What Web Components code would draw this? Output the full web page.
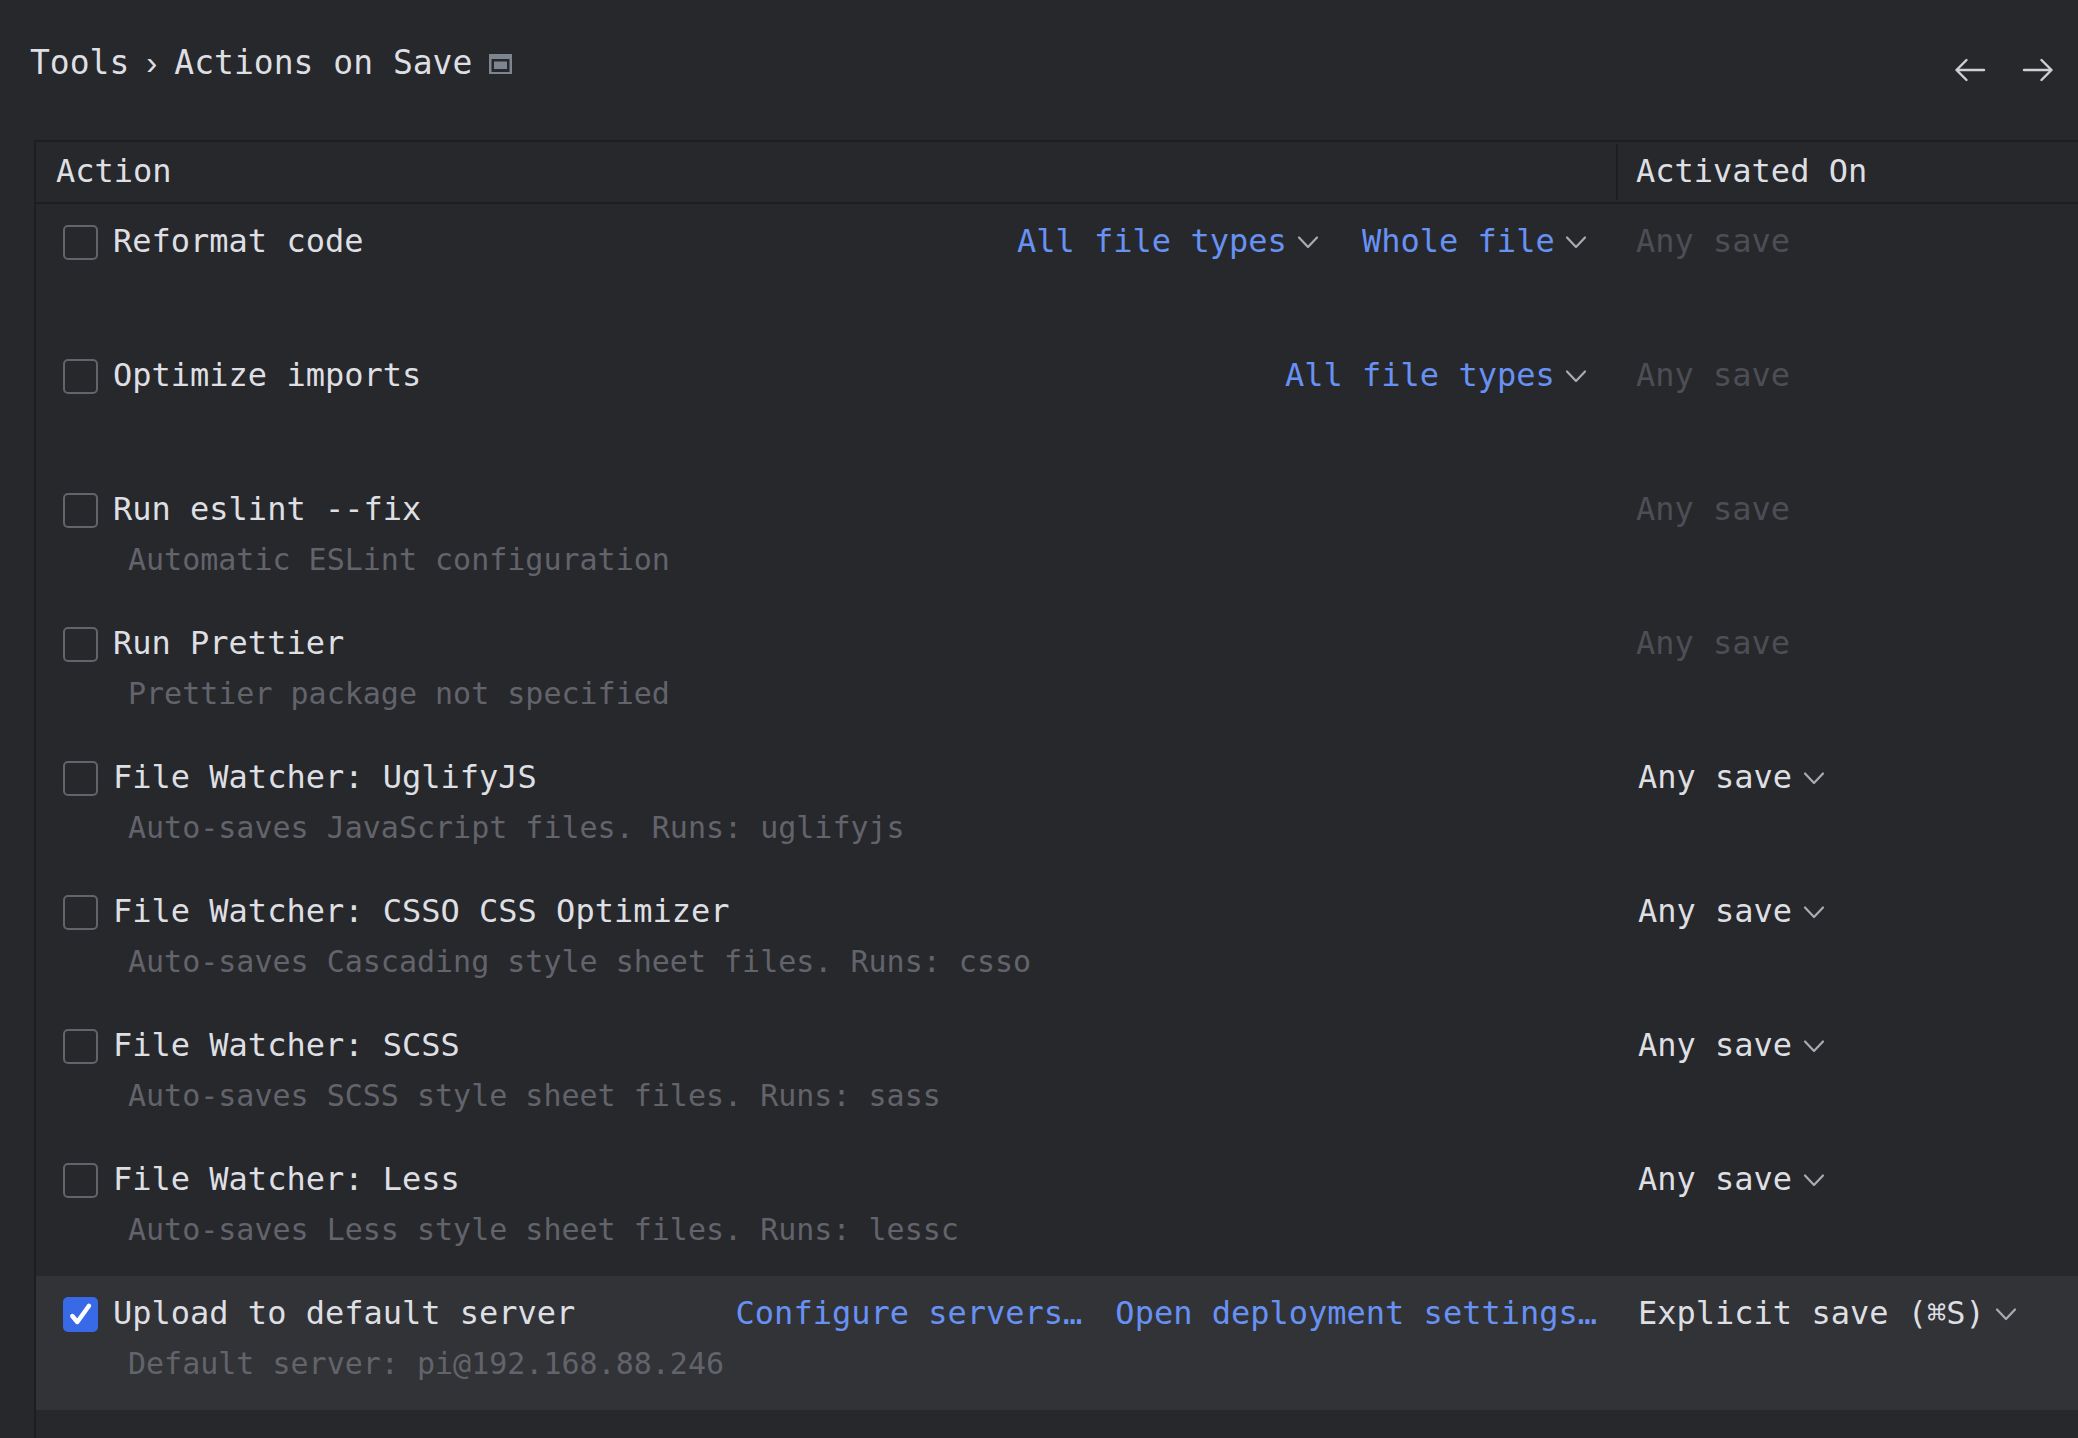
<!DOCTYPE html>
<html lang="en">
<head>
<meta charset="utf-8">
<title>Actions on Save</title>
<style>
  :root {
    --bg: #27282b;
    --line: #1d1e20;
    --selected: #323337;
    --text: #dedfe3;
    --muted: #62636b;
    --disabled: #4d4e55;
    --link: #6891f4;
    --accent: #3869e6;
    --icon: #a9abb3;
  }
  html, body { height: 100%; }
  body {
    margin: 0;
    background: var(--bg);
    color: var(--text);
    font: 32px/40px "DejaVu Sans Mono", "Liberation Mono", monospace;
  }
</style>
</head>
<body>
<settings-page>
  <settings-header slot="header">
    <span slot="group">Tools</span>
    <span slot="page">Actions on Save</span>
  </settings-header>
  <actions-table></actions-table>
</settings-page>

<script>
class BaseElement extends HTMLElement {
  constructor() {
    super();
    this.attachShadow({ mode: "open" }).innerHTML = this.constructor.markup;
  }
}

class SettingsPage extends BaseElement {
  static markup = `
    <style>
      :host { display: flex; flex-direction: column; min-height: 100vh; overflow: hidden; }
      main { flex: 1; display: flex; flex-direction: column; padding-left: 34px; }
    </style>
    <slot name="header"></slot>
    <main><slot></slot></main>`;
}

class SettingsHeader extends BaseElement {
  static markup = `
    <style>
      :host { display: block; }
      header {
        display: flex; align-items: center; justify-content: space-between;
        height: 140px; box-sizing: border-box; padding: 0 20px 0 30px;
      }
      h1 {
        display: flex; align-items: center; gap: 17px;
        margin: 0; padding-bottom: 14px; font-size: 33px; font-weight: 400;
      }
      .sep { font-family: "Liberation Sans", Arial, sans-serif; }
      h1 svg { display: block; }
      nav { display: flex; gap: 28px; }
      button {
        display: grid; place-items: center; width: 40px; height: 40px;
        padding: 0; border: 0; background: none; color: #cfd0d6;
      }
    </style>
    <header>
      <h1>
        <slot name="group"></slot>
        <span class="sep">›</span>
        <slot name="page"></slot>
        <svg width="24" height="22" viewBox="0 -2 24 22" aria-hidden="true">
          <path fill="#7d8591" fill-rule="evenodd" d="M0 0h23v20H0z M2.500 5v13h18V5z"/>
          <path fill="#7d8591" d="M5 7.500h13v7.500H5z"/>
        </svg>
      </h1>
      <nav>
        <button aria-label="Back">
          <svg width="32" height="24" viewBox="0 0 32 24" fill="none" stroke="currentColor" stroke-width="2.400" stroke-linecap="round" stroke-linejoin="round"><path d="M30 12H2.500M12.500 2L2.500 12l10 10"/></svg>
        </button>
        <button aria-label="Forward">
          <svg width="32" height="24" viewBox="0 0 32 24" fill="none" stroke="currentColor" stroke-width="2.400" stroke-linecap="round" stroke-linejoin="round"><path d="M2 12h27.500M19.500 2l10 10-10 10"/></svg>
        </button>
      </nav>
    </header>`;
}

class ActionToggle extends BaseElement {
  static markup = `
    <style>
      :host { display: block; flex: none; }
      label { display: flex; align-items: center; gap: 15px; height: 40px; }
      .box { display: grid; padding-top: 3px; }
      .box > * { grid-area: 1 / 1; }
      input {
        appearance: none; margin: 0; width: 35px; height: 35px; box-sizing: border-box;
        border: 2px solid #62636b; border-radius: 5px;
      }
      input:checked { background: var(--accent); border-color: var(--accent); }
      svg { visibility: hidden; pointer-events: none; }
      input:checked + svg { visibility: visible; }
      .note { padding: 11px 0 0 65px; font-size: 30px; color: var(--muted); }
    </style>
    <label>
      <span class="box">
        <input type="checkbox">
        <svg width="35" height="35" viewBox="0 0 35 35" fill="none" stroke="#fff" stroke-width="4.400" stroke-linecap="round" stroke-linejoin="round"><path d="M9.300 19l5 6L26 8.700"/></svg>
      </span>
      <slot></slot>
    </label>
    <div class="note"><slot name="note"></slot></div>`;
  connectedCallback() {
    this.shadowRoot.querySelector("input").checked = this.hasAttribute("checked");
  }
}

class ChoiceMenu extends BaseElement {
  static markup = `
    <style>
      :host { display: grid; width: max-content; align-items: center; color: var(--text); }
      :host([kind="link"]) { color: var(--link); }
      select, svg { grid-area: 1 / 1; }
      select {
        appearance: none; margin: 0; padding: 0 42px 0 0; border: 0; border-radius: 0;
        background: none; color: inherit; font: inherit; height: 40px;
      }
      svg { justify-self: end; pointer-events: none; }
      path { stroke: var(--icon); }
    </style>
    <select><option></option></select>
    <svg width="42" height="40" viewBox="0 0 42 40" fill="none" stroke-width="2.200" stroke-linecap="round" stroke-linejoin="round"><path d="M12 16.500l9 9.500 9-9.500"/></svg>`;
  connectedCallback() {
    this.shadowRoot.querySelector("option").textContent = this.getAttribute("value");
    this.shadowRoot.querySelector("select").setAttribute("aria-label", this.getAttribute("name"));
  }
}

class ActionsTable extends BaseElement {
  static markup = `
    <style>
      :host {
        display: block; flex: 1;
        border-top: 2px solid var(--line); border-left: 2px solid var(--line);
      }
      table { width: 100%; table-layout: fixed; border-collapse: separate; border-spacing: 0; }
      col.when { width: 462px; }
      th { padding: 2px 0; border-bottom: 2px solid var(--line); font-weight: 400; text-align: left; }
      th div { display: flex; align-items: center; height: 56px; box-sizing: border-box; padding: 0 0 2px 20px; }
      th.when div { border-left: 2px solid var(--line); padding-left: 18px; }
      td { height: 134px; box-sizing: border-box; padding: 17px 0 0 20px; vertical-align: top; }
      td:first-child { padding-left: 27px; padding-right: 19px; }
      .line { display: flex; justify-content: space-between; }
      .links { display: flex; align-items: flex-start; gap: 33px; height: 40px; }
      a { color: var(--link); text-decoration: none; white-space: nowrap; }
      choice-menu:not([kind]) { padding-left: 2px; }
      .off { color: var(--disabled); }
      tr.selected td { background: var(--selected); }
    </style>
    <table>
      <colgroup><col><col class="when"></colgroup>
      <thead><tr><th><div>Action</div></th><th class="when"><div>Activated On</div></th></tr></thead>
      <tbody>
        <tr>
          <td><div class="line"><action-toggle>Reformat code</action-toggle>
            <div class="links"><choice-menu kind="link" name="File types" value="All file types"></choice-menu><choice-menu kind="link" name="Scope" value="Whole file"></choice-menu></div></div></td>
          <td class="off">Any save</td>
        </tr>
        <tr>
          <td><div class="line"><action-toggle>Optimize imports</action-toggle>
            <div class="links"><choice-menu kind="link" name="File types" value="All file types"></choice-menu></div></div></td>
          <td class="off">Any save</td>
        </tr>
        <tr>
          <td><action-toggle>Run eslint --fix<span slot="note">Automatic ESLint configuration</span></action-toggle></td>
          <td class="off">Any save</td>
        </tr>
        <tr>
          <td><action-toggle>Run Prettier<span slot="note">Prettier package not specified</span></action-toggle></td>
          <td class="off">Any save</td>
        </tr>
        <tr>
          <td><action-toggle>File Watcher: UglifyJS<span slot="note">Auto-saves JavaScript files. Runs: uglifyjs</span></action-toggle></td>
          <td><choice-menu name="Activated on" value="Any save"></choice-menu></td>
        </tr>
        <tr>
          <td><action-toggle>File Watcher: CSSO CSS Optimizer<span slot="note">Auto-saves Cascading style sheet files. Runs: csso</span></action-toggle></td>
          <td><choice-menu name="Activated on" value="Any save"></choice-menu></td>
        </tr>
        <tr>
          <td><action-toggle>File Watcher: SCSS<span slot="note">Auto-saves SCSS style sheet files. Runs: sass</span></action-toggle></td>
          <td><choice-menu name="Activated on" value="Any save"></choice-menu></td>
        </tr>
        <tr>
          <td><action-toggle>File Watcher: Less<span slot="note">Auto-saves Less style sheet files. Runs: lessc</span></action-toggle></td>
          <td><choice-menu name="Activated on" value="Any save"></choice-menu></td>
        </tr>
        <tr class="selected">
          <td><div class="line"><action-toggle checked>Upload to default server<span slot="note">Default server: pi@192.168.88.246</span></action-toggle>
            <div class="links"><a href="#servers">Configure servers…</a><a href="#deployment">Open deployment settings…</a></div></div></td>
          <td><choice-menu name="Activated on" value="Explicit save (⌘S)"></choice-menu></td>
        </tr>
      </tbody>
    </table>`;
}

customElements.define("settings-page", SettingsPage);
customElements.define("settings-header", SettingsHeader);
customElements.define("action-toggle", ActionToggle);
customElements.define("choice-menu", ChoiceMenu);
customElements.define("actions-table", ActionsTable);
</script>
</body>
</html>
